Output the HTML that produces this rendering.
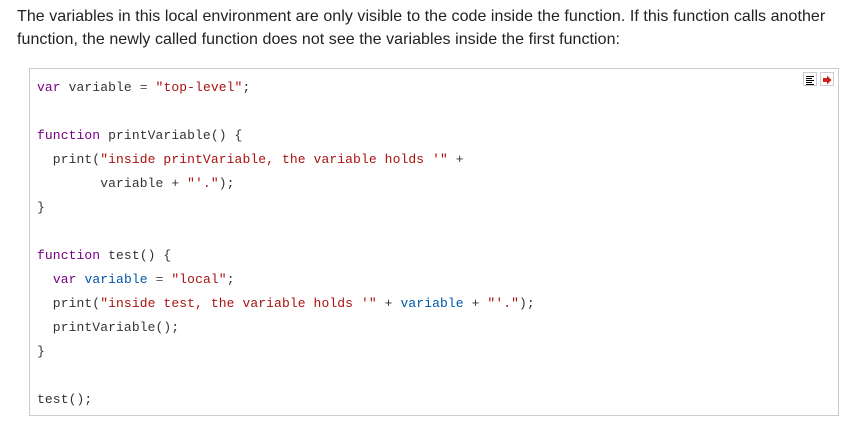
<!DOCTYPE html>
<html><head><style>
body{margin:0;background:#fff;width:862px;height:428px;overflow:hidden;position:relative;font-family:"Liberation Sans",sans-serif;}
.p{position:absolute;left:17px;top:5px;font-size:16px;line-height:23px;color:#222;white-space:nowrap;letter-spacing:0.05px;word-spacing:0px}
.box{position:absolute;left:29px;top:68px;width:808px;height:346px;border:1px solid #ccc;}
.code{position:absolute;left:37px;top:76px;font-family:"Liberation Mono",monospace;font-size:13px;line-height:24px;color:#333;white-space:pre;letter-spacing:0.1px}
.k{color:#708}.s{color:#a11}.v{color:#05a}.o{color:#555}
.b1{position:absolute;left:803px;top:72px;width:12px;height:12px;border:1px solid #ccc;background:#fff}
.b2{position:absolute;left:820px;top:72px;width:12px;height:12px;border:1px solid #ccc;background:#fff}
</style></head><body>
<div class="p">The variables in this local environment are only visible to the code inside the function. If this function calls another<br>function, the newly called function does not see the variables inside the first function:</div>
<div class="box"></div>
<div class="b1"><svg width="12" height="12"><path d="M2 2.5h8M2 4.5h6M2 6.5h8M2 8.5h6M2 10.5h8" stroke="#000" stroke-width="1"/></svg></div>
<div class="b2"><svg width="12" height="12"><path d="M2 4h4V1.5L10.5 6 6 10.5V8H2z" fill="#c22"/></svg></div>
<div class="code"><span class="k">var</span> variable <span class="o">=</span> <span class="s">"top-level"</span>;

<span class="k">function</span> printVariable() {
  print(<span class="s">"inside printVariable, the variable holds '"</span> +
        variable + <span class="s">"'."</span>);
}

<span class="k">function</span> test() {
  <span class="k">var</span> <span class="v">variable</span> <span class="o">=</span> <span class="s">"local"</span>;
  print(<span class="s">"inside test, the variable holds '"</span> + <span class="v">variable</span> + <span class="s">"'."</span>);
  printVariable();
}

test();</div>
</body></html>
